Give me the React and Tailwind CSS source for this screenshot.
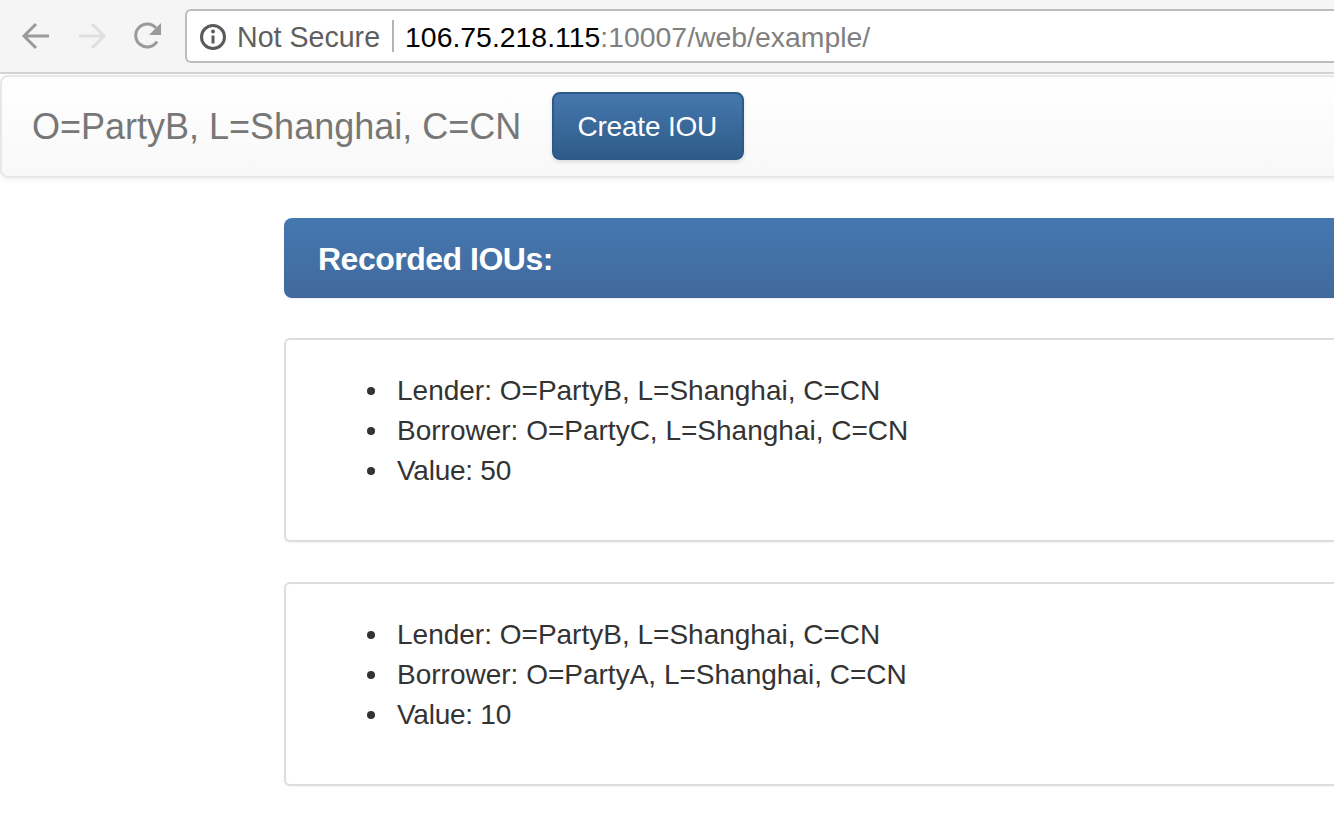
const font = "font-['Liberation_Sans',Arial,sans-serif]";

function Item({ children, className = "" }) {
  return (
    <li className={`flex h-10 items-center pt-[2px] ${className}`}>
      <span className="mr-[22px] size-2 shrink-0 rounded-full bg-[#333333]" />
      <span>{children}</span>
    </li>
  );
}

function Card({ borrower, value }) {
  return (
    <section className="mb-10 h-[204px] rounded-[6px] border-2 border-[#dddddd] bg-white p-[30px] shadow-[0_1px_2px_rgba(0,0,0,0.05)]">
      <ul className="list-none pl-[51px] text-[28px] text-[#333333]">
        <Item>Lender: O=PartyB, L=Shanghai, C=CN</Item>
        <Item>Borrower: {borrower}, L=Shanghai, C=CN</Item>
        <Item className="tracking-[-0.25px]">Value: {value}</Item>
      </ul>
    </section>
  );
}

export default function App() {
  return (
    <div className={`${font} h-[838px] w-[1334px] overflow-hidden bg-white`}>
      <header className="flex h-[74px] items-start border-b-2 border-[#d3d3d3] bg-[#f5f5f5] pl-[21px] pt-[9px]">
        <div className="flex h-[53px] w-[164px] shrink-0 items-center">
          <svg width="30" height="30" viewBox="0 0 30 30" fill="none" stroke="#9a9a9a" strokeWidth="3">
            <path d="M28 15H3M15 3L3 15l12 12" />
          </svg>
          <svg width="30" height="30" viewBox="0 0 30 30" fill="none" stroke="#dfdfdf" strokeWidth="3" className="ml-[26px]">
            <path d="M2 15h25M15 3l12 12-12 12" />
          </svg>
          <svg width="30" height="30" viewBox="0 0 30 30" fill="none" className="ml-[26px]">
            <path d="M24 20.5A11.5 11.5 0 1 1 23 7" stroke="#9a9a9a" strokeWidth="3" />
            <path d="M28 2v12H16z" fill="#9a9a9a" />
          </svg>
        </div>
        <div className="flex h-[54px] flex-1 items-center rounded-l-[6px] border-y-2 border-l-2 border-[#bdbdbd] bg-white pl-3 pt-[3px] text-[28.4px] whitespace-nowrap">
          <svg width="28" height="28" viewBox="0 0 28 28" fill="none" className="-mt-[2px] shrink-0">
            <circle cx="14" cy="14" r="11.5" stroke="#5a5a5a" strokeWidth="3" />
            <circle cx="14" cy="8.5" r="1.9" fill="#5a5a5a" />
            <path d="M14 12.5v8" stroke="#5a5a5a" strokeWidth="3" />
          </svg>
          <span className="ml-[10px] text-[28.6px] text-[#5f5f5f]">Not Secure</span>
          <span className="-mt-[3px] ml-[12px] h-8 w-[2px] bg-[#b5b5b5]" />
          <span className="ml-[11px] text-black">106.75.218.115</span>
          <span className="text-[#808080]">:10007/web/example/</span>
        </div>
      </header>
      <nav className="mt-px flex h-[103px] w-[1340px] items-center rounded-[8px] border-2 border-[#e7e7e7] bg-gradient-to-b from-white to-[#f8f8f8] pl-[30px] shadow-[0_2px_4px_rgba(0,0,0,0.06)]">
        <span className="text-[36px] whitespace-nowrap text-[#777777]">O=PartyB, L=Shanghai, C=CN</span>
        <button className="-mt-[2px] ml-[31px] h-[68px] w-[192px] rounded-[8px] border-2 border-[#2b5a87] bg-gradient-to-b from-[#4578ae] to-[#2f5b88] pr-[2px] pt-[2px] text-[28px] tracking-[-0.2px] text-white shadow-[0_2px_4px_rgba(0,0,0,0.12)]">
          Create IOU
        </button>
      </nav>
      <main className="ml-[284px] mt-[40px] w-[1200px]">
        <h1 className="mb-10 flex h-20 items-center rounded-[8px] bg-gradient-to-b from-[#4578b0] to-[#41699c] pl-[34px] pt-[2px] text-[32px] font-bold tracking-[-0.5px] text-white shadow-[0_1px_2px_rgba(0,0,0,0.08)]">
          Recorded IOUs:
        </h1>
        <Card borrower="O=PartyC" value="50" />
        <Card borrower="O=PartyA" value="10" />
      </main>
    </div>
  );
}
